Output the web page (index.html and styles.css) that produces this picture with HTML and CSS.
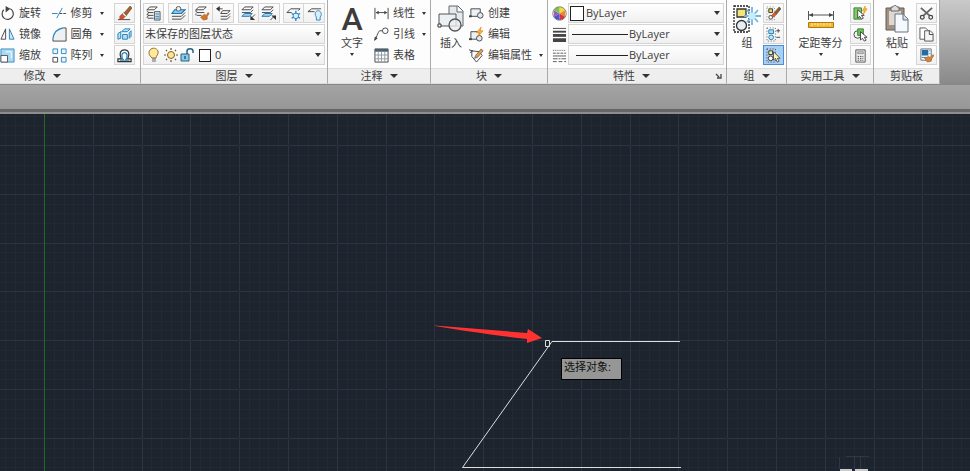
FILE: index.html
```html
<!DOCTYPE html>
<html lang="zh-CN">
<head>
  <meta charset="UTF-8" />
  <meta name="viewport" content="width=device-width, initial-scale=1.0" />
  <title>选择对象</title>
  <link rel="stylesheet" href="styles.css">
</head>
<body>
  <header class="ribbon">

    <section class="panel panel-modify">
      <div class="tools">
        <div class="list">
          <button class="tool"><svg class="icon" viewBox="0 0 16 16"><path d="M4 4A6 6 0 1 0 11 3" class="ln" stroke-width="1.300"/><path d="M6 0l5 3-5 4z" fill="#444"/></svg>旋转</button>
          <button class="tool"><svg class="icon" viewBox="0 0 16 16"><path d="M6 2v11H1z" class="ln"/><path d="M10 2v11h5z" fill="#cfe8f7" stroke="#2f7fb8"/></svg>镜像</button>
          <button class="tool"><svg class="icon" viewBox="0 0 16 16"><path d="M1 1h14v14H1z" fill="#a9daf2" stroke="#3b8fc4"/><path d="M1 8h7v7H1z" fill="#fff" stroke="#555"/><path d="M6 4h6v7" fill="none" stroke="#fff"/></svg>缩放</button>
        </div>
        <div class="list">
          <button class="tool"><svg class="icon" viewBox="0 0 16 16"><path d="M0 8h6M5 13l6-11" class="bl"/><path d="M8 8h8" class="ln" stroke-dasharray="3 1"/></svg>修剪<span class="caret"></span></button>
          <button class="tool"><svg class="icon" viewBox="0 0 16 16"><path d="M1 15C1 7 6 1 15 1v14z" fill="#eef1f3"/><path d="M1 12C2 6 6 2 12 1" class="bl" stroke-width="1.400"/><path d="M12 1h3v14H1v-3" class="ln"/></svg>圆角<span class="caret"></span></button>
          <button class="tool"><svg class="icon" viewBox="0 0 16 16"><path d="M1 1h5v5H1zM10 1h5v5h-5zM10 10h5v5h-5z" fill="#e6f5fd" stroke="#2f86c0"/><path d="M1 10h5v5H1z" fill="#fff" stroke="#444"/></svg>阵列<span class="caret"></span></button>
        </div>
        <div class="stack">
          <button class="square" aria-label="删除"><svg class="icon" viewBox="0 0 16 16"><path d="M1 14.500h13" class="ln"/><path d="M7 8l7-8 2 2-6 8z" fill="#a5612b" stroke="#5d3a20" stroke-width=".6"/><path d="M5.500 8.500L7 7l3 3-1.500 1.500z" fill="#eee" stroke="#666" stroke-width=".6"/><path d="M3 11l2.500-2.500 3 3L6 14H3z" fill="#d8512f" stroke="#a33d22" stroke-width=".6"/></svg></button>
          <button class="square" aria-label="分解"><svg class="icon" viewBox="0 0 16 16"><path d="M1 7l3-2v7l-3 1zM6 8h5v5H6zM5 5l3-3h6l-3 3zM13 6l2-2v6l-2 2z" fill="#b9e2f7" stroke="#1d80bd"/></svg></button>
          <button class="square" aria-label="偏移"><svg class="icon" viewBox="0 0 16 16"><path d="M1 14.500v-3h3.500C2 6 3.500 2 8 2s6 4 3.500 9.500H15v3z" fill="#fff" stroke="#333" stroke-width="1.300"/><path d="M3 13h4C4 9 5 5 8 5s4 4 1 8h4" class="bl" stroke-width="1.300"/></svg></button>
        </div>
      </div>
      <button class="title">修改<span class="caret big"></span></button>
    </section>

    <section class="panel panel-layers">
      <div class="tools column">
        <div class="groups">
          <div class="group"><button class="square" aria-label="图层特性"><svg class="icon" viewBox="0 0 16 16"><path d="M4 1h8L9 4H1zM2 7h6M2 10h6M2 13h6M1 5l2 2-2 2 2 1-2 2 1 1" class="ln"/><path d="M9 6h6v9H9z" fill="#dce6ee" stroke="#555"/><path d="M10 8.500h4M10 11h4M10 13h4" class="bl"/></svg></button></div>
          <div class="group"><button class="square" aria-label="置为当前"><svg class="icon" viewBox="0 0 16 16"><path d="M4 4h11l-4 4H1z" fill="#8acbee" stroke="#1876b3" stroke-width="1.300"/><path d="M1 11h10l4-4M1 14h10l4-4" class="ln"/><circle cx="8" cy="3" r="2.500" fill="#eee" stroke="#555"/></svg></button></div>
          <div class="group">
            <button class="square" aria-label="匹配图层"><svg class="icon" viewBox="0 0 16 16"><path d="M4 1h8L9 4H1zM2 7h8M2 10h5M1 4v2l2 1M1 8v2" class="ln"/><path d="M6 12l4-3 2 1 2-3 1 1-2 3v3l-4 1z" fill="#d47724" stroke="#8f4b16" stroke-width=".6"/></svg></button>
            <button class="square" aria-label="上一个"><svg class="icon" viewBox="0 0 16 16"><path d="M7 5h8l-3 3H5zM5 11h7l3-3M5 14h7l3-3" class="ln"/><path d="M7 3H2" class="ln"/><path d="M4 0L0 3l4 3z" fill="#333"/></svg></button>
          </div>
          <div class="group">
            <button class="square" aria-label="隔离"><svg class="icon" viewBox="0 0 16 16"><path d="M4 1h9l-3 3H1zM1 7h9l3-3" class="ln"/><path d="M4 8h8l-3 3H1z" fill="#9bd4f2" stroke="#1876b3"/><path d="M15 9l-4 4" class="ln"/><path d="M10 10v5h5z" fill="#333"/></svg></button>
            <button class="square" aria-label="取消隔离"><svg class="icon" viewBox="0 0 16 16"><path d="M4 1h9l-3 3H1zM1 7h9l3-3" class="ln"/><path d="M4 8h8l-3 3H1z" fill="#9bd4f2" stroke="#1876b3"/><path d="M10 15l4-4" class="ln"/><path d="M11 10h5v5z" fill="#333"/></svg></button>
          </div>
          <div class="group">
            <button class="square" aria-label="冻结"><svg class="icon" viewBox="0 0 16 16"><path d="M6 7H1l4-4h10l-2 2" class="ln"/><circle cx="10.500" cy="10.500" r="3" fill="#d9f0fb" stroke="#2583c0"/><path d="M10.500 5v3M10.500 13v3M6 8l2 1M13 12l2 1M15 8l-2 1M8 12l-2 1" class="bl" stroke-width="1.400"/></svg></button>
            <button class="square" aria-label="关闭"><svg class="icon" viewBox="0 0 16 16"><path d="M8 6H1l4-3h10" class="ln"/><path d="M10 12c-3-5 0-7 2-7s5 3 2 7v3h-4z" fill="#d8f0fc" stroke="#3284b9"/></svg></button>
          </div>
        </div>
        <div class="combo"><select aria-label="图层状态"><option>未保存的图层状态</option></select></div>
        <div class="combo">
          <svg class="layer-icons" viewBox="0 0 48 16"><path d="M5 11C2 8 1 6 3 3s7-2 8 1-2 5-2 7z" fill="#ffe99a" stroke="#927438"/><path d="M5 12h4M5 14h4" stroke="#666"/><circle cx="24" cy="8" r="3.500" fill="#ffe391" stroke="#80652c"/><path d="M24 1v2M24 13v2M17 8h2M29 8h2M19 3l1 1M28 12l1 1M29 3l-1 1M20 12l-1 1" stroke="#66542f" stroke-width="1.200"/><path d="M34 7h8v7h-8z" fill="#8ccbe8" stroke="#246384"/><path d="M40 7V4c0-3 6-3 6 0v2M38 9v3" fill="none" stroke="#246384" stroke-width="1.500"/></svg>
          <span class="swatch small"></span>
          <select aria-label="图层"><option>0</option></select>
        </div>
      </div>
      <button class="title">图层<span class="caret big"></span></button>
    </section>

    <section class="panel panel-annotate">
      <div class="tools">
        <button class="large"><span class="letter">A</span>文字<span class="caret"></span></button>
        <div class="list">
          <button class="tool"><svg class="icon" viewBox="0 0 16 16"><path d="M1 2v12M15 2v12M2 7h12" class="ln"/><path d="M2 7l3-2v4zM14 7l-3-2v4z" fill="#444"/></svg>线性<span class="caret"></span></button>
          <button class="tool"><svg class="icon" viewBox="0 0 16 16"><circle cx="12" cy="4" r="3" class="ln"/><path d="M9 4H6c-1 0-3 6-5 10" class="ln"/><path d="M0 15l1-5 3 2z" fill="#444"/></svg>引线<span class="caret"></span></button>
          <button class="tool"><svg class="icon" viewBox="0 0 16 16"><path d="M1 1h14v14H1z" fill="#fff" stroke="#444"/><path d="M1 1h14v3H1z" fill="#4a6274"/><path d="M1 7.500h14M1 11.500h14M4.500 4v11M8 4v11M11.500 4v11" stroke="#8d9aa4"/></svg>表格</button>
        </div>
      </div>
      <button class="title">注释<span class="caret big"></span></button>
    </section>

    <section class="panel panel-block">
      <div class="tools">
        <button class="large"><svg class="picture" viewBox="0 0 28 28"><path d="M12 1h9l5 5v15H12z" fill="#e5e9ee" stroke="#63686e"/><path d="M20 1v6h6" fill="#fff" stroke="#63686e"/><path d="M2 9h17v12H2z" fill="#edf0f3" stroke="#555"/><path d="M1 19h3v3H1z" fill="#fff" stroke="#333"/><circle cx="18" cy="20" r="6" fill="#e8edf1" fill-opacity=".8" stroke="#555" stroke-width="1.300"/></svg>插入</button>
        <div class="list">
          <button class="tool"><svg class="icon" viewBox="0 0 16 16"><path d="M2 3h10v8H2z" fill="#eef1f4" stroke="#444"/><path d="M0 10h3v2H0z" fill="#444"/><circle cx="12" cy="10" r="3" fill="#e4e9ef" stroke="#444"/></svg>创建</button>
          <button class="tool"><svg class="icon" viewBox="0 0 16 16"><path d="M2 5h9v8H2z" fill="#eef1f4" stroke="#444"/><path d="M0 12h3v2H0z" fill="#444"/><circle cx="11" cy="12" r="3" fill="#e4e9ef" stroke="#444"/><path d="M13 0L8 6h3l-1 4 5-6h-3z" fill="#ffb431" stroke="#d47b17" stroke-width=".6"/></svg>编辑</button>
          <button class="tool"><svg class="icon" viewBox="0 0 16 16"><path d="M3 3l8 1 3 4-6 7-5-6zM0 2l4 1M1 5l3-2" class="ln"/><path d="M7 8l6-7 2 2-6 7-3 1z" fill="#ef9f3e" stroke="#555" stroke-width=".8"/></svg>编辑属性<span class="caret"></span></button>
        </div>
      </div>
      <button class="title">块<span class="caret big"></span></button>
    </section>

    <section class="panel panel-properties">
      <div class="tools column">
        <div class="property">
          <svg class="icon" viewBox="0 0 16 16"><path d="M8 8V1a7 7 0 0 1 6 3.500z" fill="#f4d83c"/><path d="M8 8l6-3.500v7z" fill="#ef8429"/><path d="M8 8l6 3.500A7 7 0 0 1 8 15z" fill="#dc3439"/><path d="M8 8v7a7 7 0 0 1-6-3.500z" fill="#4c54d3"/><path d="M8 8l-6 3.500v-7z" fill="#9a5cc0"/><path d="M8 8L2 4.500A7 7 0 0 1 8 1z" fill="#7bc34b"/><circle cx="8" cy="8" r="7.200" fill="none" stroke="#666" stroke-width=".8"/></svg>
          <div class="combo"><span class="swatch"></span><select aria-label="颜色"><option>ByLayer</option></select></div>
        </div>
        <div class="property">
          <svg class="icon" viewBox="0 0 16 16"><path d="M1 1.500h14" stroke="#444"/><path d="M1 5h14" stroke="#444" stroke-width="2"/><path d="M1 9h14" stroke="#444" stroke-width="3"/><path d="M1 14h14" stroke="#444" stroke-width="4"/></svg>
          <div class="combo"><span class="line"></span><select aria-label="线宽"><option>ByLayer</option></select></div>
        </div>
        <div class="property">
          <svg class="icon" viewBox="0 0 16 16"><path d="M1 2.500h14" stroke="#555" stroke-dasharray="1 1"/><path d="M1 5.500h14" stroke="#555" stroke-dasharray="3 1"/><path d="M1 8.500h14" stroke="#555"/><path d="M1 11.500h14" stroke="#555" stroke-dasharray="5 1 2 1"/><path d="M1 14.500h14" stroke="#555" stroke-dasharray="4 2"/></svg>
          <div class="combo"><span class="line short"></span><select aria-label="线型"><option>ByLayer</option></select></div>
        </div>
      </div>
      <div class="title-row">
        <button class="title">特性<span class="caret big"></span></button>
        <button class="launcher" aria-label="特性选项"><svg viewBox="0 0 8 8"><path d="M1 2l3 3M6 2v4H2" fill="none" stroke="#444" stroke-width="1.300"/></svg></button>
      </div>
    </section>

    <section class="panel panel-group">
      <div class="tools">
        <button class="large"><svg class="picture" viewBox="0 0 28 28"><path d="M1 1h15v26H1z" fill="none" stroke="#222" stroke-width="1.300" stroke-dasharray="2 1"/><path d="M4 4h9v8H4z" fill="#f3e578" stroke="#333" stroke-width="1.300"/><circle cx="8.500" cy="20.500" r="5" fill="#e7eef4" stroke="#333" stroke-width="1.300"/><path d="M19 2v18M11 11h17M14 5l11 12M25 5L14 17" stroke="#69b7e6" stroke-width="1.800"/><circle cx="19" cy="11" r="3.500" fill="#c9ebfc"/></svg>组</button>
        <div class="stack">
          <button class="square" aria-label="解除编组"><svg class="icon" viewBox="0 0 16 16"><path d="M1 1h8v14H1z" fill="none" stroke="#888" stroke-dasharray="1 2"/><path d="M3 3h4v4H3z" fill="#e9d94f" stroke="#333"/><circle cx="5" cy="12" r="2" class="ln"/><path d="M9 7l5-6 2 2-5 6z" fill="#8a5c39" stroke="#5b3b26" stroke-width=".6"/><path d="M6 10l3-3 2 2-3 3z" fill="#df5b35" stroke="#a33d22" stroke-width=".6"/></svg></button>
          <button class="square" aria-label="组编辑"><svg class="icon" viewBox="0 0 16 16"><path d="M1 1h9v14H1z" fill="none" stroke="#555" stroke-dasharray="1 2"/><path d="M3 3h5v4H3z" fill="#aadcf4" stroke="#277eae"/><circle cx="5.500" cy="11" r="2.500" fill="#c5e6f6" stroke="#277eae"/><path d="M11 4h4M13 2v4M11 11h4" class="ln"/></svg></button>
          <button class="square active" aria-label="启用组选择" aria-pressed="true"><svg class="icon" viewBox="0 0 16 16"><path d="M1 1h9v14H1z" fill="none" stroke="#333" stroke-dasharray="1 2"/><path d="M3 3h4v4H3z" fill="#fff0a0" stroke="#333"/><circle cx="5" cy="11" r="2.500" fill="#fff" stroke="#333"/><path d="M8 4v9l2-2 2 4 2-1-2-3h3z" fill="#fff4b9" stroke="#333" stroke-width=".8"/></svg></button>
        </div>
      </div>
      <button class="title">组<span class="caret big"></span></button>
    </section>

    <section class="panel panel-utilities">
      <div class="tools">
        <button class="large"><svg class="picture" viewBox="0 0 28 28"><path d="M1.500 6v9M26.500 6v9M2 10h24" stroke="#555"/><path d="M2 10l4-2v4zM26 10l-4-2v4z" fill="#444"/><path d="M1.500 17.500h25v5h-25z" fill="#f5b72c" stroke="#b17916"/><path d="M5 18v3M8 18v2M11 18v3M14 18v2M17 18v3M20 18v2M23 18v3" stroke="#fff0b2"/></svg>定距等分<span class="caret"></span></button>
        <div class="stack">
          <button class="square" aria-label="快速选择"><svg class="icon" viewBox="0 0 16 16"><path d="M1 2h8v12H1z" fill="#80cb69" stroke="#367f2d"/><path d="M5 4v9l2-2 2 3 2-1-2-3h3z" fill="#fff" stroke="#444"/><path d="M13 0l-3 5h2l-1 4 4-6h-2z" fill="#ffb431" stroke="#de871b" stroke-width=".6"/></svg></button>
          <button class="square" aria-label="全部选择"><svg class="icon" viewBox="0 0 16 16"><circle cx="5" cy="8" r="4" class="ln"/><path d="M5 2h6v7H5z" fill="#72c35d" stroke="#367f2d"/><path d="M8 5v9l2-2 2 3 2-1-2-3h3z" fill="#fff" stroke="#444"/></svg></button>
          <button class="square" aria-label="计算器"><svg class="icon" viewBox="0 0 16 16"><path d="M3 2h10v13H3z" fill="#eee" stroke="#555"/><path d="M5 4h6v2H5z" fill="#c5d3dc" stroke="#666" stroke-width=".6"/><path d="M5 9h6M5 11h6M5 13h6" stroke="#444" stroke-dasharray="1.500 1"/></svg></button>
        </div>
      </div>
      <button class="title">实用工具<span class="caret big"></span></button>
    </section>

    <section class="panel panel-clipboard">
      <div class="tools">
        <button class="large"><svg class="picture" viewBox="0 0 28 28"><path d="M3 3h18v22H3z" fill="#a29181" stroke="#655b53"/><path d="M6 6h12v14H6z" fill="#ddd8d2"/><path d="M8 2h2c0-2 4-2 4 0h2v4H8z" fill="#ddd" stroke="#666"/><path d="M12 9h8l5 5v13H12z" fill="#f5f8fc" stroke="#667383"/><path d="M20 9v6h5" fill="#d1dce8" stroke="#667383"/></svg>粘贴<span class="caret"></span></button>
        <div class="stack">
          <button class="square" aria-label="剪切"><svg class="icon" viewBox="0 0 16 16"><path d="M2 2l9 8M14 2l-9 8" stroke="#666" stroke-width="2"/><circle cx="3.500" cy="12" r="2" class="ln" stroke-width="1.300"/><circle cx="12.500" cy="12" r="2" class="ln" stroke-width="1.300"/></svg></button>
          <button class="square" aria-label="复制"><svg class="icon" viewBox="0 0 16 16"><path d="M1 1h6l3 3v9H1z" fill="#fff" stroke="#555"/><path d="M6 4h6l3 3v8H6z" fill="#f5f5f5" stroke="#555"/><path d="M11 4v4h4" class="ln"/></svg></button>
          <button class="square" aria-label="特性匹配"><svg class="icon" viewBox="0 0 16 16"><path d="M2 1h11v12H2z" fill="#fff" stroke="#5d7184"/><path d="M3 2h7v6H3z" fill="#286b9e"/><path d="M3 10h5M11 3h1M11 6h1" class="bl"/><path d="M6 11l4-2 2 1 3-3 1 1-3 4v2l-4 1z" fill="#d98435" stroke="#985322" stroke-width=".6"/></svg></button>
        </div>
      </div>
      <div class="title">剪贴板</div>
    </section>
  </header>

  <div class="tab-bar"></div>

  <main class="canvas">
    <svg class="drawing" aria-hidden="true">
      <defs>
        <pattern id="grid" x="44" y="31" width="244" height="244" patternUnits="userSpaceOnUse">
          <path class="minor" d="M10 0h1v244h-1zM20 0h1v244h-1zM29 0h1v244h-1zM39 0h1v244h-1zM59 0h1v244h-1zM68 0h1v244h-1zM78 0h1v244h-1zM88 0h1v244h-1zM107 0h1v244h-1zM117 0h1v244h-1zM127 0h1v244h-1zM137 0h1v244h-1zM156 0h1v244h-1zM166 0h1v244h-1zM176 0h1v244h-1zM185 0h1v244h-1zM205 0h1v244h-1zM215 0h1v244h-1zM224 0h1v244h-1zM234 0h1v244h-1z"/>
          <path class="minor" d="M0 10v1h244v-1zM0 20v1h244v-1zM0 29v1h244v-1zM0 39v1h244v-1zM0 59v1h244v-1zM0 68v1h244v-1zM0 78v1h244v-1zM0 88v1h244v-1zM0 107v1h244v-1zM0 117v1h244v-1zM0 127v1h244v-1zM0 137v1h244v-1zM0 156v1h244v-1zM0 166v1h244v-1zM0 176v1h244v-1zM0 185v1h244v-1zM0 205v1h244v-1zM0 215v1h244v-1zM0 224v1h244v-1zM0 234v1h244v-1z"/>
          <path class="major" d="M0 0h1v244H0zM49 0h1v244h-1zM98 0h1v244h-1zM146 0h1v244h-1zM195 0h1v244h-1zM0 0v1h244V0zM0 49v1h244v-1zM0 98v1h244v-1zM0 146v1h244v-1zM0 195v1h244v-1z"/>
        </pattern>
      </defs>
      <rect width="100%" height="100%" fill="url(#grid)"/>
      <path class="axis" d="M44.500 0v2000"/>
      <path class="shape" d="M680 227.500H552L462.500 353.500H681"/>
      <path class="shape" d="M545.500 226.500h4v6h-4z"/>
      <path d="M435 211.500l92 7.500 1-4 14 9-15 5v-4c-34-4-62-8-92-13z" fill="#ff3232"/>
      <path d="M846 342.500h23M839.500 343v12M854.500 343v12M860.500 343v12" stroke="#2f3743" fill="none"/>
      <path d="M840 357v-2h12v2zM855 357v-2h13v2z" fill="#ccc"/>
    </svg>
    <div class="tooltip">选择对象:</div>
  </main>
</body>
</html>
```

FILE: styles.css
```css
:root {
  --text: #3c3c3c;
  --line: #444;
  --blue: #2583c0;
  --border: #d5d5d5;
  --canvas: #1d242e;
}

* {
  box-sizing: border-box;
}

body {
  display: flex;
  flex-direction: column;
  min-height: 100vh;
  margin: 0;
  overflow: hidden;
  background-color: var(--canvas);
  font-family: "Open Sans", "Noto Sans CJK SC", sans-serif;
  font-size: 11px;
  line-height: 16px;
  color: var(--text);
}

button, select {
  margin: 0;
  padding: 0;
  border: none;
  background: transparent;
  font: inherit;
  color: inherit;
  white-space: nowrap;
}

svg {
  display: block;
  flex: none;
}

.ln {
  fill: none;
  stroke: var(--line);
}

.bl {
  fill: none;
  stroke: var(--blue);
}

/* ribbon */
.ribbon {
  display: flex;
  background: linear-gradient(#c9c9c9, #898989);
  border-bottom: 1px solid #888;
}

.panel {
  display: flex;
  flex-direction: column;
  flex: none;
  background-color: #fdfdfd;
  border-right: 1px solid #aaa;
  border-bottom: 1px solid #ddd;
}

.panel-modify { width: 141px; }
.panel-layers { width: 187px; }
.panel-annotate { width: 103px; }
.panel-block { width: 117px; }
.panel-properties { width: 179px; }
.panel-group { width: 60px; }
.panel-utilities { width: 87px; }
.panel-clipboard { width: 66px; }

.tools {
  display: flex;
  justify-content: space-between;
  height: 68px;
  padding: 3px 2px 0 4px;
}

.panel-modify .tools {
  padding-left: 0;
  padding-right: 5px;
}

.panel-layers .tools {
  padding-left: 2px;
}

.panel-block .tools,
.panel-annotate .tools {
  padding-left: 2px;
  padding-right: 4px;
}

.tools.column {
  flex-direction: column;
  justify-content: flex-start;
  gap: 1px;
}

.list, .stack {
  display: flex;
  flex-direction: column;
  gap: 1px;
}

.tool {
  display: flex;
  align-items: center;
  gap: 4px;
  height: 20px;
}

.tool .caret {
  margin-left: 3px;
}

.icon {
  width: 15px;
  height: 15px;
}

.square {
  display: flex;
  align-items: center;
  justify-content: center;
  width: 21px;
  height: 20px;
  border: 1px solid var(--border);
  background: linear-gradient(#fcfcfc, #f1f1f1);
}

.square.active {
  border-color: #4d8fce;
  background: #a8cff5;
}

.groups {
  display: flex;
  justify-content: space-between;
}

.group {
  display: flex;
}

.group .square + .square {
  border-left: none;
}

.large {
  display: flex;
  flex-direction: column;
  align-items: center;
  flex: 1;
}

.picture {
  width: 28px;
  height: 28px;
  margin: 2px 0;
}

.letter {
  height: 32px;
  font-family: Roboto, sans-serif;
  font-size: 32px;
  font-weight: 500;
  line-height: 32px;
}

.large .caret {
  margin-top: 2px;
}

.caret {
  flex: none;
  border: 2px solid transparent;
  border-top: 3px solid #333;
  border-bottom: none;
}

.caret.big {
  margin-left: 7px;
  border-width: 4px 4px 0;
}

.combo {
  display: flex;
  align-items: center;
  flex: 1;
  max-height: 20px;
  min-height: 20px;
  padding: 0 3px 0 1px;
  border: 1px solid var(--border);
  background: linear-gradient(#fff, #f0f0f0);
}

.combo::after {
  content: "";
  border: 3px solid transparent;
  border-top: 4px solid #333;
  border-bottom: none;
}

.combo select {
  flex: 1;
  min-width: 0;
  appearance: none;
}

.swatch {
  width: 14px;
  height: 15px;
  margin: 0 2px 0 0;
  border: 1px solid #222;
  background-color: #fff;
}

.swatch.small {
  width: 12px;
  height: 13px;
  margin: 0 4px;
}

.layer-icons {
  width: 48px;
  height: 16px;
  margin-left: 2px;
}

.line {
  width: 56px;
  margin: 0 1px 0 2px;
  border-top: 1px solid #222;
}

.line.short {
  width: 52px;
  margin-left: 6px;
}

.property {
  display: flex;
  align-items: center;
  gap: 1px;
}

.title {
  display: flex;
  align-items: center;
  justify-content: center;
  height: 15px;
  border-top: 1px solid #ddd;
  background-color: #eee;
}

.panel-modify .title {
  padding-right: 56px;
}

.title-row {
  display: flex;
  background-color: #eee;
}

.title-row .title {
  flex: 1;
}

.launcher {
  display: flex;
  align-items: center;
  width: 11px;
  border-top: 1px solid #ddd;
}

.launcher svg {
  width: 8px;
  height: 8px;
}

/* strip between the ribbon and the drawing */
.tab-bar {
  height: 29px;
  background: linear-gradient(#a4a4a4, #959595);
  border-bottom: 2px solid #8d8d8d;
  box-shadow: inset 0 -3px #666;
}

/* drawing area */
.canvas {
  position: relative;
  flex: 1;
  background-color: var(--canvas);
}

.drawing {
  position: absolute;
  width: 100%;
  height: 100%;
}

.minor {
  fill: #212935;
}

.major {
  fill: #2c3442;
}

.axis {
  stroke: #1f6a24;
}

.shape {
  fill: none;
  stroke: #dedede;
}

.tooltip {
  position: absolute;
  top: 244px;
  left: 561px;
  width: 61px;
  height: 22px;
  padding-left: 2px;
  border: 1px solid #000;
  background-color: #969696;
  color: #111;
}
```
